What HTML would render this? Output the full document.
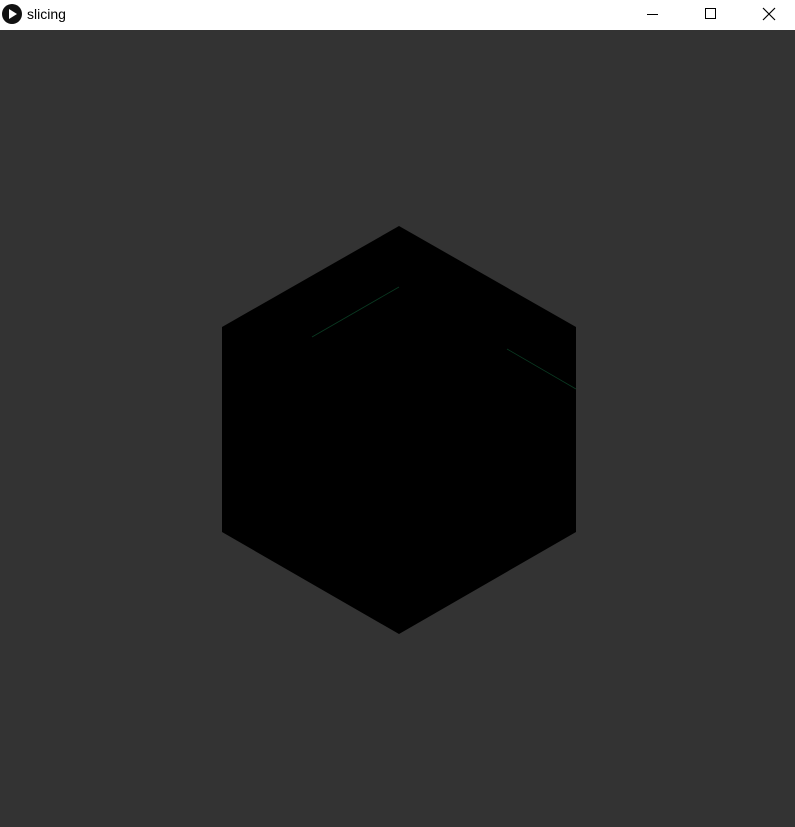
<!DOCTYPE html>
<html><head><style>
html,body{margin:0;padding:0;width:795px;height:827px;overflow:hidden;background:#333;}
.bar{position:absolute;left:0;top:0;width:795px;height:30px;background:#fff;}
.t{position:absolute;left:27px;top:6px;font:14px "Liberation Sans",sans-serif;color:#000;}
</style></head><body>
<div class="bar">
<svg width="795" height="30" style="position:absolute;left:0;top:0">
<circle cx="12" cy="14" r="10" fill="#111"/>
<polygon points="9,9 9,19 17,14" fill="#fff"/>
<line x1="647" y1="14.5" x2="658" y2="14.5" stroke="#000" stroke-width="1"/>
<rect x="705.5" y="8.5" width="10" height="10" fill="none" stroke="#000" stroke-width="1"/>
<path d="M763 8 L775 20 M775 8 L763 20" stroke="#000" stroke-width="1.2"/>
</svg>
<div class="t">slicing</div>
</div>
<svg width="795" height="827" style="position:absolute;left:0;top:0">
<rect x="0" y="30" width="795" height="797" fill="#333"/>
<polygon points="399,226 576,327 576,532 399,634 222,532 222,327" fill="#000"/>
<line x1="312" y1="337" x2="399" y2="287" stroke="#0a3a22" stroke-width="0.8"/>
<line x1="507" y1="349" x2="576" y2="389" stroke="#0a3a22" stroke-width="0.8"/>
</svg>
</body></html>
